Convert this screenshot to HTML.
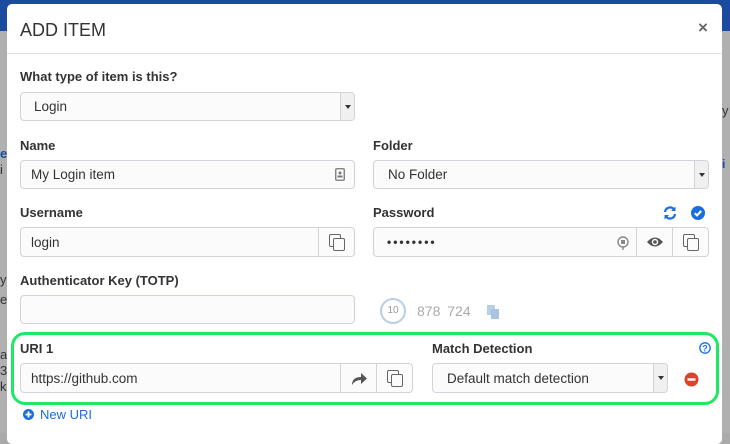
<!DOCTYPE html>
<html><head><style>
*{box-sizing:border-box;margin:0;padding:0}
body{width:730px;height:433px;overflow:hidden;background:#aaaaaa;font-family:"Liberation Sans",sans-serif;position:relative;color:#333}
.top{position:absolute;left:0;top:0;width:730px;height:31px;background:#1b4b9f}
.modal{position:absolute;left:7px;top:4px;width:715px;height:440px;background:#fff;border-radius:5px}
.a{position:absolute}
.lbl{position:absolute;font-weight:bold;font-size:13px;color:#333}
.inp{position:absolute;background:#fbfbfb;border:1px solid #ced4da;border-radius:4px;font-size:13.5px;color:#333;padding-left:10px;display:flex;align-items:center}
.btn{position:absolute;border:1px solid #ced4da;background:#fbfbfb;display:flex;align-items:center;justify-content:center}
.caret{position:absolute;right:0;top:0;bottom:0;width:14px;border-left:1px solid #ced4da;background:#f0f0f0;display:flex;align-items:center;justify-content:center;border-radius:0 4px 4px 0}
.caret:after{content:"";border-left:3px solid transparent;border-right:3px solid transparent;border-top:4px solid #333}
.cp{width:15px;height:16px;position:relative}
.cp:before{content:"";position:absolute;left:0;top:0;width:10px;height:11px;border:1.5px solid #666;border-radius:2px}
.cp:after{content:"";position:absolute;left:4px;top:4px;width:10px;height:11px;border:1.5px solid #666;border-radius:2px;background:#fbfbfb}
</style></head><body>
<div class="top"></div>
<div class="a" style="left:0;top:31px;width:7px;height:402px;background:#b0b0b0"></div>
<div class="a" style="left:0;top:146px;font-size:13px;color:#1b4b9f;font-weight:bold">e</div>
<div class="a" style="left:0;top:162px;font-size:13px">i</div>
<div class="a" style="left:0;top:272px;font-size:13px">y</div>
<div class="a" style="left:0;top:292px;font-size:13px">e</div>
<div class="a" style="left:0;top:347px;font-size:13px">a</div>
<div class="a" style="left:0;top:363px;font-size:13px">3</div>
<div class="a" style="left:0;top:379px;font-size:13px">k</div>
<div class="a" style="left:722px;top:31px;width:8px;height:402px;background:#b0b0b0"></div>
<div class="a" style="left:722px;top:103px;font-size:13px">y</div>
<div class="a" style="left:722px;top:157px;font-size:12px;color:#1b4b9f;font-weight:bold">i</div>
<div class="modal">
 <div class="a" style="left:13px;top:16px;font-size:18px;color:#333">ADD ITEM</div>
 <div class="a" style="left:691px;top:14px;font-size:17px;color:#666;font-weight:bold">×</div>
 <div class="a" style="left:0;top:49px;width:715px;height:1px;background:#dee2e6"></div>
</div>
<div class="lbl" style="left:20px;top:69px">What type of item is this?</div>
<div class="inp" style="left:20px;top:92px;width:335px;height:29px;padding-left:13px">Login<div class="caret"></div></div>
<div class="lbl" style="left:20px;top:138px">Name</div>
<div class="inp" style="left:20px;top:160px;width:335px;height:29px">My Login item
 <svg class="a" style="right:9px;top:7px" width="10" height="13"><rect x="0.75" y="0.75" width="8.5" height="11.5" rx="1" fill="none" stroke="#777" stroke-width="1.3"/><circle cx="5" cy="5" r="1.5" fill="#777"/><rect x="2.5" y="7.5" width="5" height="2" fill="#777"/></svg></div>
<div class="lbl" style="left:373px;top:138px">Folder</div>
<div class="inp" style="left:373px;top:160px;width:336px;height:29px;padding-left:14px">No Folder<div class="caret"></div></div>
<div class="lbl" style="left:20px;top:205px">Username</div>
<div class="inp" style="left:20px;top:227px;width:300px;height:30px;border-radius:4px 0 0 4px">login</div>
<div class="btn" style="left:318px;top:227px;width:37px;height:30px;border-radius:0 4px 4px 0"><div class="cp"></div></div>
<div class="lbl" style="left:373px;top:205px">Password</div>
<svg class="a" style="left:663px;top:206px" width="14" height="14" viewBox="0 0 14 14"><path d="M2 6A5 5 0 0 1 11 3.5M12 8A5 5 0 0 1 3 10.5" fill="none" stroke="#1a6fe0" stroke-width="2.2"/><path d="M12.5 0.5V5H8z M1.5 13.5V9H6z" fill="#1a6fe0"/></svg>
<svg class="a" style="left:691px;top:206px" width="14" height="14"><circle cx="7" cy="7" r="7" fill="#1a6fe0"/><path d="M3.8 7.2l2.2 2.2 4.2-4.4" fill="none" stroke="#fff" stroke-width="2"/></svg>
<div class="inp" style="left:373px;top:227px;width:265px;height:30px;border-radius:4px 0 0 4px;letter-spacing:2px;font-size:12px;font-weight:bold;padding-left:13px">••••••••
 <svg class="a" style="right:8px;top:8px" width="12" height="14"><circle cx="6" cy="6" r="5" fill="none" stroke="#888" stroke-width="1.4"/><rect x="4" y="4" width="4" height="4" fill="#888"/><path d="M6 11v3" stroke="#888" stroke-width="1.4"/></svg></div>
<div class="btn" style="left:636px;top:227px;width:37px;height:30px"><svg width="18" height="12"><path d="M1 6Q9 -3 17 6Q9 15 1 6z" fill="#555"/><circle cx="9" cy="6" r="3.2" fill="#fbfbfb"/><circle cx="9" cy="6" r="1.8" fill="#555"/></svg></div>
<div class="btn" style="left:672px;top:227px;width:37px;height:30px;border-radius:0 4px 4px 0"><div class="cp"></div></div>
<div class="lbl" style="left:20px;top:273px">Authenticator Key (TOTP)</div>
<div class="inp" style="left:20px;top:295px;width:335px;height:29px"></div>
<div class="a" style="left:380px;top:298px;width:26px;height:26px;border-radius:50%;border:2px solid #b8cfe8;font-size:10px;color:#999;text-align:center;line-height:22px">10</div>
<div class="a" style="left:417px;top:303px;font-size:14px;color:#aaa;word-spacing:3px">878 724</div>
<svg class="a" style="left:487px;top:305px" width="12" height="14"><rect x="0" y="0" width="8" height="10" fill="#b8cfe8"/><rect x="4" y="4" width="8" height="10" fill="#a9c3e2"/></svg>
<div class="a" style="left:11px;top:332px;width:708px;height:73px;border:3px solid #1de965;border-radius:14px"></div>
<div class="lbl" style="left:20px;top:341px">URI 1</div>
<div class="inp" style="left:20px;top:363px;width:322px;height:30px;border-radius:4px 0 0 4px">https://github.com</div>
<div class="btn" style="left:340px;top:363px;width:37px;height:30px"><svg width="16" height="13"><path d="M1 13Q1 5 10 5V1L16 6.5L10 12V8Q4 8 1 13z" fill="#555"/></svg></div>
<div class="btn" style="left:376px;top:363px;width:37px;height:30px;border-radius:0 4px 4px 0"><div class="cp"></div></div>
<div class="lbl" style="left:432px;top:341px">Match Detection</div>
<svg class="a" style="left:699px;top:342px" width="12" height="12"><circle cx="6" cy="6" r="5.2" fill="none" stroke="#1a6fe0" stroke-width="1.3"/><text x="6" y="9.5" font-size="9" font-weight="bold" fill="#1a6fe0" text-anchor="middle" font-family="Liberation Sans">?</text></svg>
<div class="inp" style="left:432px;top:363px;width:236px;height:30px;padding-left:14px">Default match detection<div class="caret"></div></div>
<svg class="a" style="left:684px;top:372px" width="15" height="15"><circle cx="7.5" cy="7.5" r="7" fill="#d9442f"/><rect x="3.5" y="6.3" width="8" height="2.4" fill="#fff"/></svg>
<svg class="a" style="left:23px;top:409px" width="11" height="11"><circle cx="5.5" cy="5.5" r="5.5" fill="#1a6fe0"/><path d="M5.5 2.5v6M2.5 5.5h6" stroke="#fff" stroke-width="1.8"/></svg>
<div class="a" style="left:40px;top:407px;font-size:13px;color:#1a6fe0">New URI</div>
</body></html>
